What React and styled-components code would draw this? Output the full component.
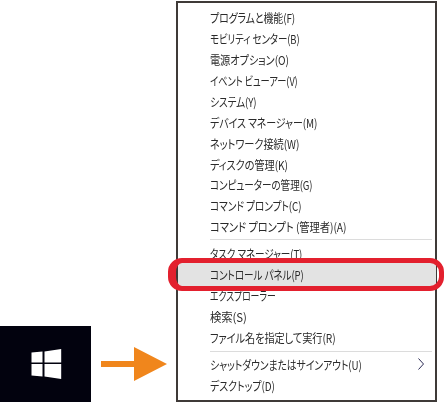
import React from "react";
import styled, { createGlobalStyle } from "styled-components";

const Global = createGlobalStyle`
  html, body { margin: 0; padding: 0; background: #fff; }
  body { font-family: "Noto Sans CJK JP", "Liberation Sans", sans-serif; }
`;

const Page = styled.div`
  position: relative;
  width: 445px;
  height: 403px;
  overflow: hidden;
  display: flex;
  align-items: flex-end;
  background: #fff;
`;

const Left = styled.div`
  display: flex;
  align-items: center;
  width: 176px;
  height: 76px;
  margin-bottom: 1px;
  flex: none;
`;

const Tile = styled.div`
  width: 91px;
  height: 76px;
  background: #02020e;
  display: flex;
  align-items: center;
  justify-content: center;
  flex: none;
`;

const Arrow = styled.svg`
  margin-left: 10px;
  flex: none;
`;

const Menu = styled.div`
  box-sizing: border-box;
  width: 261px;
  height: 401px;
  margin-bottom: 1px;
  border: 2px solid #3f3a38;
  background: #fff;
  padding: 4px 0 4px 1px;
  display: flex;
  flex-direction: column;
  flex: none;
`;

const Row = styled.div`
  height: 21px;
  padding-left: 31px;
  padding-right: 11px;
  display: flex;
  align-items: center;
  justify-content: space-between;
  background: ${(p) => (p.$active ? "#e3e3e3" : "transparent")};
  box-shadow: ${(p) => (p.$active ? "0 0 0 1px #e3e3e3" : "none")};
`;

/* The reference's UI font has condensed kana: each label carries its own squeeze. */
const Label = styled.span`
  display: inline-block;
  font-size: 12px;
  font-feature-settings: "palt";
  color: #2a2a2a;
  white-space: nowrap;
  letter-spacing: -0.1px;
  transform-origin: left center;
  transform: scaleX(${(p) => p.$squeeze});
`;

const Sep = styled.div`
  height: 1px;
  margin: ${(p) => (p.$low ? "3px 3px 2px 31px" : "2px 3px 3px 31px")};
  background: #dcdcdc;
`;

const Ring = styled.div`
  position: absolute;
  left: 168px;
  top: 258px;
  width: 276px;
  height: 33px;
  box-sizing: border-box;
  border: 5px solid #e3202e;
  border-left-width: 8px;
  border-radius: 14px;
`;

const upper = [
  ["プログラムと機能(F)", 0.825],
  ["モビリティ センター(B)", 0.79],
  ["電源オプション(O)", 0.85],
  ["イベント ビューアー(V)", 0.77],
  ["システム(Y)", 0.81],
  ["デバイス マネージャー(M)", 0.83],
  ["ネットワーク接続(W)", 0.85],
  ["ディスクの管理(K)", 0.85],
  ["コンピューターの管理(G)", 0.8],
  ["コマンド プロンプト(C)", 0.81],
  ["コマンド プロンプト (管理者)(A)", 0.86],
];

const middle = [
  ["タスク マネージャー(T)", 0.8],
  ["コントロール パネル(P)", 0.8, true],
  ["エクスプローラー", 0.74],
  ["検索(S)", 0.95],
  ["ファイル名を指定して実行(R)", 0.85],
];

export default function App() {
  return (
    <Page>
      <Global />
      <Left>
        <Tile>
          <svg width="32" height="32" viewBox="0 0 32 32">
            <g fill="#fff" style={{ filter: "blur(0.7px)" }}>
              <path d="M1.5 4.6 L12.5 3.6 V14.4 H1.5 Z" />
              <path d="M14.5 3.4 L31.2 1 V14.4 H14.5 Z" />
              <path d="M1.5 16 H12.5 V28.4 L1.5 27.4 Z" />
              <path d="M14.5 16 H31.2 V31 L14.5 28.6 Z" />
            </g>
          </svg>
        </Tile>
        <Arrow width="66" height="34" viewBox="0 0 66 34">
          <path d="M0 14 H33 V0 L66 17 L33 34 V20 H0 Z" fill="#f0861c" />
        </Arrow>
      </Left>
      <Menu>
        {upper.map(([t, s]) => (
          <Row key={t}>
            <Label $squeeze={s}>{t}</Label>
          </Row>
        ))}
        <Sep />
        {middle.map(([t, s, active]) => (
          <Row key={t} $active={active}>
            <Label $squeeze={s}>{t}</Label>
          </Row>
        ))}
        <Sep $low />
        <Row>
          <Label $squeeze={0.82}>シャットダウンまたはサインアウト(U)</Label>
          <svg width="6" height="12" viewBox="0 0 6 12">
            <path d="M0.5 0.5 L5.5 6 L0.5 11.5" fill="none" stroke="#2b2b55" strokeWidth="1" />
          </svg>
        </Row>
        <Row>
          <Label $squeeze={0.83}>デスクトップ(D)</Label>
        </Row>
      </Menu>
      <Ring />
    </Page>
  );
}
